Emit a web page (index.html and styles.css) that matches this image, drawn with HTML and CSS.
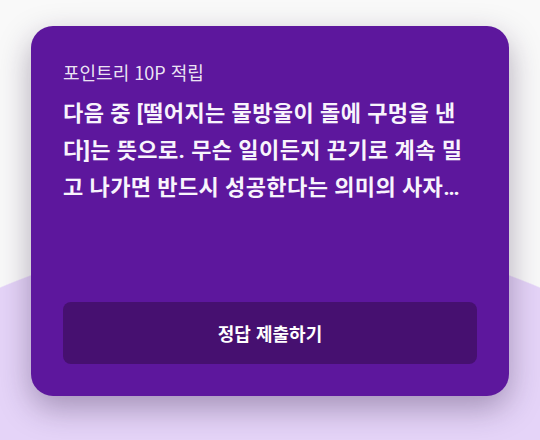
FILE: index.html
```html
<!DOCTYPE html>
<html lang="ko">
<head>
    <meta charset="UTF-8">
    <title>오늘의 퀴즈</title>
    <link rel="stylesheet" href="styles.css">
</head>
<body>

    <div class="quiz-card">
        <p class="reward">포인트리 10P 적립</p>
        <p class="question">다음 중 [떨어지는 물방울이 돌에 구멍을 낸다]는 뜻으로. 무슨 일이든지 끈기로 계속 밀고 나가면 반드시 성공한다는 의미의 사자성어는 무엇일까요?</p>
        <button class="submit-btn">정답 제출하기</button>
    </div>

</body>
</html>
```

FILE: styles.css
```css
html, body {
    margin: 0;
    height: 100%;
}
body {
    font-family: "Noto Sans CJK KR", "Noto Sans", sans-serif;
    background: radial-gradient(circle 692px at 270px 924px, #e5d4f8 99.8%, #f9f9f9 100%);
    padding-top: 26px;
    box-sizing: border-box;
}
.quiz-card {
    width: 478px;
    height: 370px;
    margin: 0 auto;
    box-sizing: border-box;
    padding: 34px 32px 32px;
    background: #5d179d;
    border-radius: 22px;
    box-shadow: 0 12px 32px rgba(40, 20, 60, 0.35);
    display: flex;
    flex-direction: column;
    color: #fff;
}
.reward {
    margin: 0;
    font-size: 18px;
    line-height: 24px;
    color: rgba(255, 255, 255, 0.9);
}
.question {
    margin: 11px 0 0;
    font-family: Roboto, "Noto Sans CJK KR", sans-serif;
    font-size: 22px;
    line-height: 37px;
    letter-spacing: 0.4px;
    font-weight: bold;
    color: #f8f4fc;
    display: -webkit-box;
    -webkit-line-clamp: 3;
    -webkit-box-orient: vertical;
    overflow: hidden;
}
.submit-btn {
    margin-top: auto;
    height: 62px;
    border: none;
    border-radius: 8px;
    background: #461070;
    color: #fff;
    font-family: inherit;
    font-size: 18px;
    font-weight: bold;
}
```
